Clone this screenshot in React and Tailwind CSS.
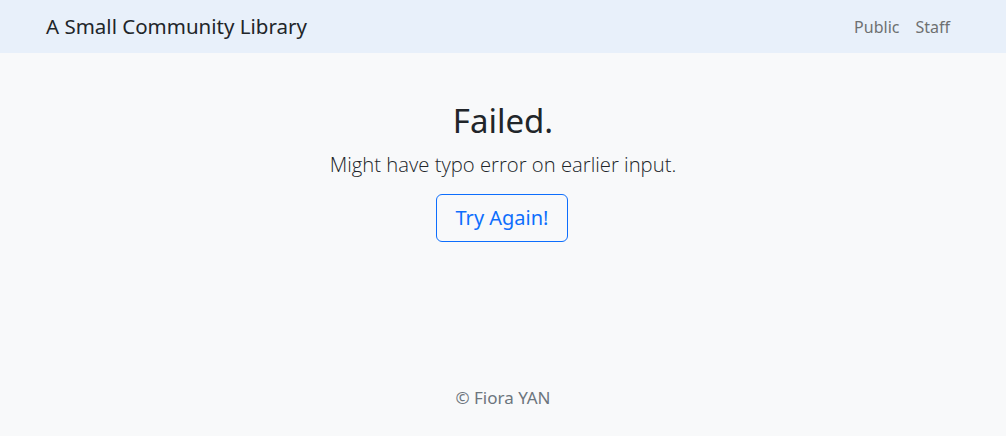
export default function App() {
  return (
    <div className="min-h-screen flex flex-col bg-[#f8f9fa]" style={{ fontFamily: '"Noto Sans", "Open Sans", sans-serif' }}>
      <nav className="h-[53px] bg-[#e8f0fa] flex items-center justify-between pl-[46px] pr-[56px]">
        <span className="text-[20.5px] text-[#212529]">A Small Community Library</span>
        <div className="flex gap-4 text-[16px] text-[#6e7071]">
          <span>Public</span>
          <span>Staff</span>
        </div>
      </nav>
      <main className="flex-1 flex flex-col items-center pt-[46px]">
        <h1 className="text-[33px] leading-[44px] text-[#212529] mb-[6px]">Failed.</h1>
        <p className="text-[20.25px] leading-[30px] font-light text-[#212529] mb-[15px]" style={{ fontFamily: '"Open Sans", "Noto Sans", sans-serif' }}>Might have typo error on earlier input.</p>
        <button className="h-[48px] w-[132px] mr-[2px] border border-[#0d6efd] rounded-[6px] text-[#0d6efd] text-[20px]">Try Again!</button>
      </main>
      <footer className="flex justify-center pb-[26px] text-[17px] leading-[24px] text-[#6c757d]">
        © Fiora YAN
      </footer>
    </div>
  );
}
